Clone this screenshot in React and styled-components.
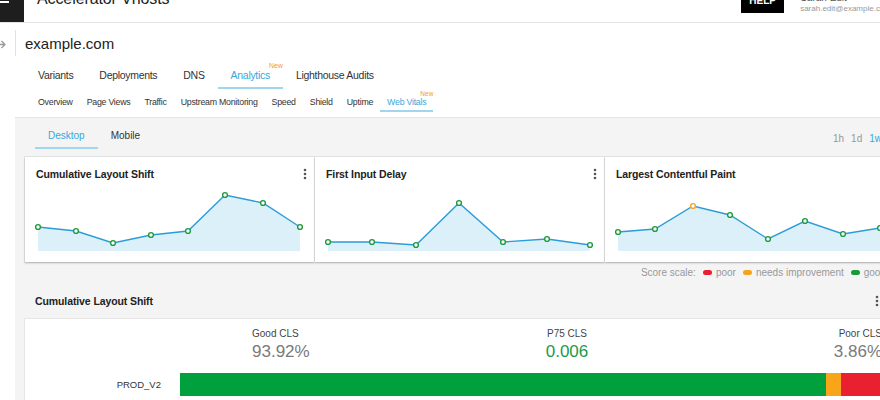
import React, { useState } from "react";
import styled, { createGlobalStyle } from "styled-components";

const GlobalStyle = createGlobalStyle`
  html, body {
    margin: 0;
    padding: 0;
    background: #ffffff;
    overflow: hidden;
  }
  body {
    font-family: "Liberation Sans", Arial, sans-serif;
    color: #333;
  }
`;

const Page = styled.div`
  width: 904px;
`;

/* top header, partly scrolled out of view */
const Header = styled.header`
  display: flex;
  align-items: center;
  height: 46px;
  margin-top: -24px;
  padding-right: 13px;
  border-bottom: 1px solid #e3e3e3;
`;

const MenuBox = styled.div`
  width: 24px;
  height: 46px;
  background: #1e1e1e;
  display: flex;
  flex-direction: column;
  justify-content: flex-end;
  gap: 3px;
  padding-bottom: 19px;
  box-sizing: border-box;
  span {
    display: block;
    width: 9px;
    height: 2px;
    background: #fff;
  }
`;

const AppTitle = styled.div`
  margin-left: 13px;
  font-size: 16px;
  letter-spacing: -0.1px;
  color: #222;
`;

const HelpButton = styled.button`
  margin-left: auto;
  width: 43px;
  height: 28px;
  border: none;
  background: #000;
  color: #fff;
  font-family: inherit;
  font-weight: bold;
  font-size: 10px;
  padding: 2px 0 0;
`;

const User = styled.div`
  margin-left: 16px;
  margin-top: 8px;
  display: flex;
  flex-direction: column;
  line-height: 11px;
`;

const UserName = styled.span`
  font-size: 10px;
  color: #555;
`;

const UserMail = styled.span`
  font-size: 8px;
  color: #999;
`;

const Layout = styled.div`
  display: flex;
`;

const Sidebar = styled.div`
  width: 15px;
  flex-shrink: 0;
  padding-top: 7px;
  color: #888;
  overflow: hidden;
`;

const Main = styled.main`
  flex: 1;
  min-width: 0;
`;

const SiteRow = styled.div`
  display: flex;
  align-items: center;
  height: 26px;
  margin-top: 7px;
  border-left: 1px solid #e2e2e2;
  padding-left: 9px;
  font-size: 15px;
  color: #222;
`;

const TabBar = styled.nav`
  display: flex;
  margin-top: ${(p) => p.$top}px;
  padding-left: ${(p) => p.$left}px;
`;

const Tab = styled.div`
  position: relative;
  padding: ${(p) => (p.$small ? "8px 7px 2px" : "9px 13px 5px")};
  font-size: ${(p) => (p.$small ? "8.8px" : "10.5px")};
  letter-spacing: ${(p) => (p.$small ? "-0.25px" : "-0.3px")};
  line-height: ${(p) => (p.$small ? "11px" : "13px")};
  color: ${(p) => (p.$active ? "#39a7dc" : "#333")};
  border-bottom: 2px solid ${(p) => (p.$active ? "#a2d6ef" : "transparent")};
  white-space: nowrap;
  cursor: pointer;
`;

const DeviceTab = styled(Tab)`
  padding: 6px 13px 5px;
  font-size: 10px;
  letter-spacing: 0;
  line-height: 12px;
`;

const NewBadge = styled.span`
  position: absolute;
  right: 0;
  top: ${(p) => (p.$small ? "1px" : "2px")};
  font-size: ${(p) => (p.$small ? "6.5px" : "7px")};
  letter-spacing: 0;
  line-height: 8px;
  color: #f29a2e;
`;

const Panel = styled.section`
  margin-top: 5px;
  background: #f4f4f4;
  border-top: 1px solid #e6e6e6;
  padding: 6px 10px 0;
  height: 300px;
`;

const PanelTop = styled.div`
  display: flex;
  align-items: flex-start;
`;

const RangeList = styled.div`
  margin-left: auto;
  margin-right: 12px;
  margin-top: 9px;
  display: flex;
  gap: 7px;
  font-size: 10px;
`;

const Range = styled.span`
  color: ${(p) => (p.$active ? "#39a7dc" : "#999")};
  cursor: pointer;
`;

const CardRow = styled.div`
  display: grid;
  grid-template-columns: repeat(3, 290px);
  margin-top: 8px;
`;

const Card = styled.div`
  background: #fff;
  height: 105px;
  box-shadow: 0 1px 2px rgba(0, 0, 0, 0.25), 0 0 0 1px #e6e6e6;
  display: flex;
  flex-direction: column;
`;

const CardHead = styled.div`
  display: flex;
  align-items: center;
  justify-content: space-between;
  padding: 11px 8px 0 11px;
  line-height: 12px;
`;

const Title = styled.div`
  font-size: 10.5px;
  font-weight: bold;
  letter-spacing: -0.1px;
  color: #222;
`;

const ChartBox = styled.div`
  height: 72px;
  margin-top: 5px;
`;

const ScaleRow = styled.div`
  display: flex;
  justify-content: flex-end;
  align-items: center;
  gap: 7px;
  margin: 3px 8px 0 0;
  height: 14px;
  font-size: 10px;
  color: #999;
`;

const ScaleItem = styled.span`
  display: flex;
  align-items: center;
  gap: 4px;
`;

const Pill = styled.span`
  width: 9px;
  height: 5px;
  border-radius: 3px;
  background: ${(p) => p.$color};
`;

const SectionHead = styled.div`
  display: flex;
  align-items: center;
  justify-content: space-between;
  height: 20px;
  margin-top: 12px;
  padding: 0 15px 0 10px;
`;

const SectionCard = styled.div`
  margin-top: 8px;
  background: #fff;
  box-shadow: 0 0 0 1px #e6e6e6;
  height: 120px;
  padding: 9px 12px 0 0;
`;

const Stats = styled.div`
  display: grid;
  grid-template-columns: repeat(3, 210px);
  margin-left: 227px;
`;

const Stat = styled.div`
  display: flex;
  flex-direction: column;
  align-items: ${(p) => p.$align};
`;

const StatLabel = styled.span`
  font-size: 10px;
  line-height: 12px;
  color: #444;
`;

const StatValue = styled.span`
  margin-top: 1px;
  font-size: 17px;
  line-height: 22px;
  color: ${(p) => p.$color || "#7a7a7a"};
`;

const BarRow = styled.div`
  display: grid;
  grid-template-columns: 145px 1fr;
  column-gap: 10px;
  align-items: center;
  margin-top: 10px;
`;

const BarLabel = styled.span`
  text-align: right;
  padding-right: 9px;
  font-size: 9.5px;
  color: #333;
`;

const Bar = styled.div`
  display: flex;
  height: 23px;
`;

const Segment = styled.div`
  background: ${(p) => p.$color};
`;

const Kebab = () => (
  <svg width="4" height="12" viewBox="0 0 4 12">
    <circle cx="2" cy="2" r="1.3" fill="#555" />
    <circle cx="2" cy="6" r="1.3" fill="#555" />
    <circle cx="2" cy="10" r="1.3" fill="#555" />
  </svg>
);

const ArrowIcon = () => (
  <svg width="15" height="26" viewBox="0 0 15 26">
    <path d="M-4 14.5h8M1.5 11l3.5 3.5-3.5 3.5" fill="none" stroke="#999" strokeWidth="1.3" />
  </svg>
);

const GOOD = "#1f9a3f";
const WARN = "#f5a623";

const Sparkline = ({ points }) => {
  const line = points.map((p) => `${p.x},${p.y}`).join(" ");
  const first = points[0];
  const last = points[points.length - 1];
  const area = `${first.x},66 ${line} ${last.x},66`;
  return (
    <svg width="290" height="72" viewBox="0 0 290 72">
      <polygon points={area} fill="#dcf0fa" />
      <polyline points={line} fill="none" stroke="#2b9cd8" strokeWidth="1.4" />
      {points.map((p, i) => (
        <circle key={i} cx={p.x} cy={p.y} r="2.4" fill="#fff" stroke={p.warn ? WARN : GOOD} strokeWidth="1.4" />
      ))}
    </svg>
  );
};

const pts = (xs, ys, warnIdx = -1) => xs.map((x, i) => ({ x, y: ys[i], warn: i === warnIdx }));

const cards = [
  {
    title: "Cumulative Layout Shift",
    points: pts([13, 51, 88, 126, 163, 200, 238, 275], [42, 46, 58, 50, 46, 10, 18, 42]),
  },
  {
    title: "First Input Delay",
    points: pts([13, 57, 101, 144, 188, 232, 275], [57, 57, 60, 18, 57, 54, 60]),
  },
  {
    title: "Largest Contentful Paint",
    points: pts([13, 50, 88, 125, 163, 200, 238, 275], [47, 44, 21, 30, 54, 36, 49, 43], 2),
  },
];

const mainTabs = ["Variants", "Deployments", "DNS", "Analytics", "Lighthouse Audits"];
const subTabs = ["Overview", "Page Views", "Traffic", "Upstream Monitoring", "Speed", "Shield", "Uptime", "Web Vitals"];

const App = () => {
  const [device, setDevice] = useState("Desktop");
  const [range, setRange] = useState("1w");

  return (
    <Page>
      <GlobalStyle />
      <Header>
        <MenuBox>
          <span />
          <span />
          <span />
        </MenuBox>
        <AppTitle>Accelerator Vhosts</AppTitle>
        <HelpButton>HELP</HelpButton>
        <User>
          <UserName>Sarah Edit</UserName>
          <UserMail>sarah.edit@example.com</UserMail>
        </User>
      </Header>

      <Layout>
        <Sidebar>
          <ArrowIcon />
        </Sidebar>
        <Main>
          <SiteRow>example.com</SiteRow>

          <TabBar $top={4} $left={10}>
            {mainTabs.map((t) => (
              <Tab key={t} $active={t === "Analytics"}>
                {t}
                {t === "Analytics" && <NewBadge>New</NewBadge>}
              </Tab>
            ))}
          </TabBar>

          <TabBar $top={0} $left={16}>
            {subTabs.map((t) => (
              <Tab key={t} $small $active={t === "Web Vitals"}>
                {t}
                {t === "Web Vitals" && <NewBadge $small>New</NewBadge>}
              </Tab>
            ))}
          </TabBar>

          <Panel>
            <PanelTop>
              <TabBar $top={0} $left={10}>
                {["Desktop", "Mobile"].map((d) => (
                  <DeviceTab key={d} $active={device === d} onClick={() => setDevice(d)}>
                    {d}
                  </DeviceTab>
                ))}
              </TabBar>
              <RangeList>
                {["1h", "1d", "1w"].map((r) => (
                  <Range key={r} $active={range === r} onClick={() => setRange(r)}>
                    {r}
                  </Range>
                ))}
              </RangeList>
            </PanelTop>

            <CardRow>
              {cards.map((c) => (
                <Card key={c.title}>
                  <CardHead>
                    <Title>{c.title}</Title>
                    <Kebab />
                  </CardHead>
                  <ChartBox>
                    <Sparkline points={c.points} />
                  </ChartBox>
                </Card>
              ))}
            </CardRow>

            <ScaleRow>
              <span>Score scale:</span>
              <ScaleItem>
                <Pill $color="#e8202f" />
                poor
              </ScaleItem>
              <ScaleItem>
                <Pill $color="#f7a21b" />
                needs improvement
              </ScaleItem>
              <ScaleItem>
                <Pill $color="#1a9a3a" />
                good
              </ScaleItem>
            </ScaleRow>

            <SectionHead>
              <Title>Cumulative Layout Shift</Title>
              <Kebab />
            </SectionHead>

            <SectionCard>
              <Stats>
                <Stat $align="flex-start">
                  <StatLabel>Good CLS</StatLabel>
                  <StatValue>93.92%</StatValue>
                </Stat>
                <Stat $align="center">
                  <StatLabel>P75 CLS</StatLabel>
                  <StatValue $color="#22994b">0.006</StatValue>
                </Stat>
                <Stat $align="flex-end">
                  <StatLabel>Poor CLS</StatLabel>
                  <StatValue>3.86%</StatValue>
                </Stat>
              </Stats>
              <BarRow>
                <BarLabel>PROD_V2</BarLabel>
                <Bar>
                  <Segment $color="#00a03c" style={{ flex: 646 }} />
                  <Segment $color="#f9a51a" style={{ flex: 15 }} />
                  <Segment $color="#e8202f" style={{ flex: 41 }} />
                </Bar>
              </BarRow>
            </SectionCard>
          </Panel>
        </Main>
      </Layout>
    </Page>
  );
};

export default App;
